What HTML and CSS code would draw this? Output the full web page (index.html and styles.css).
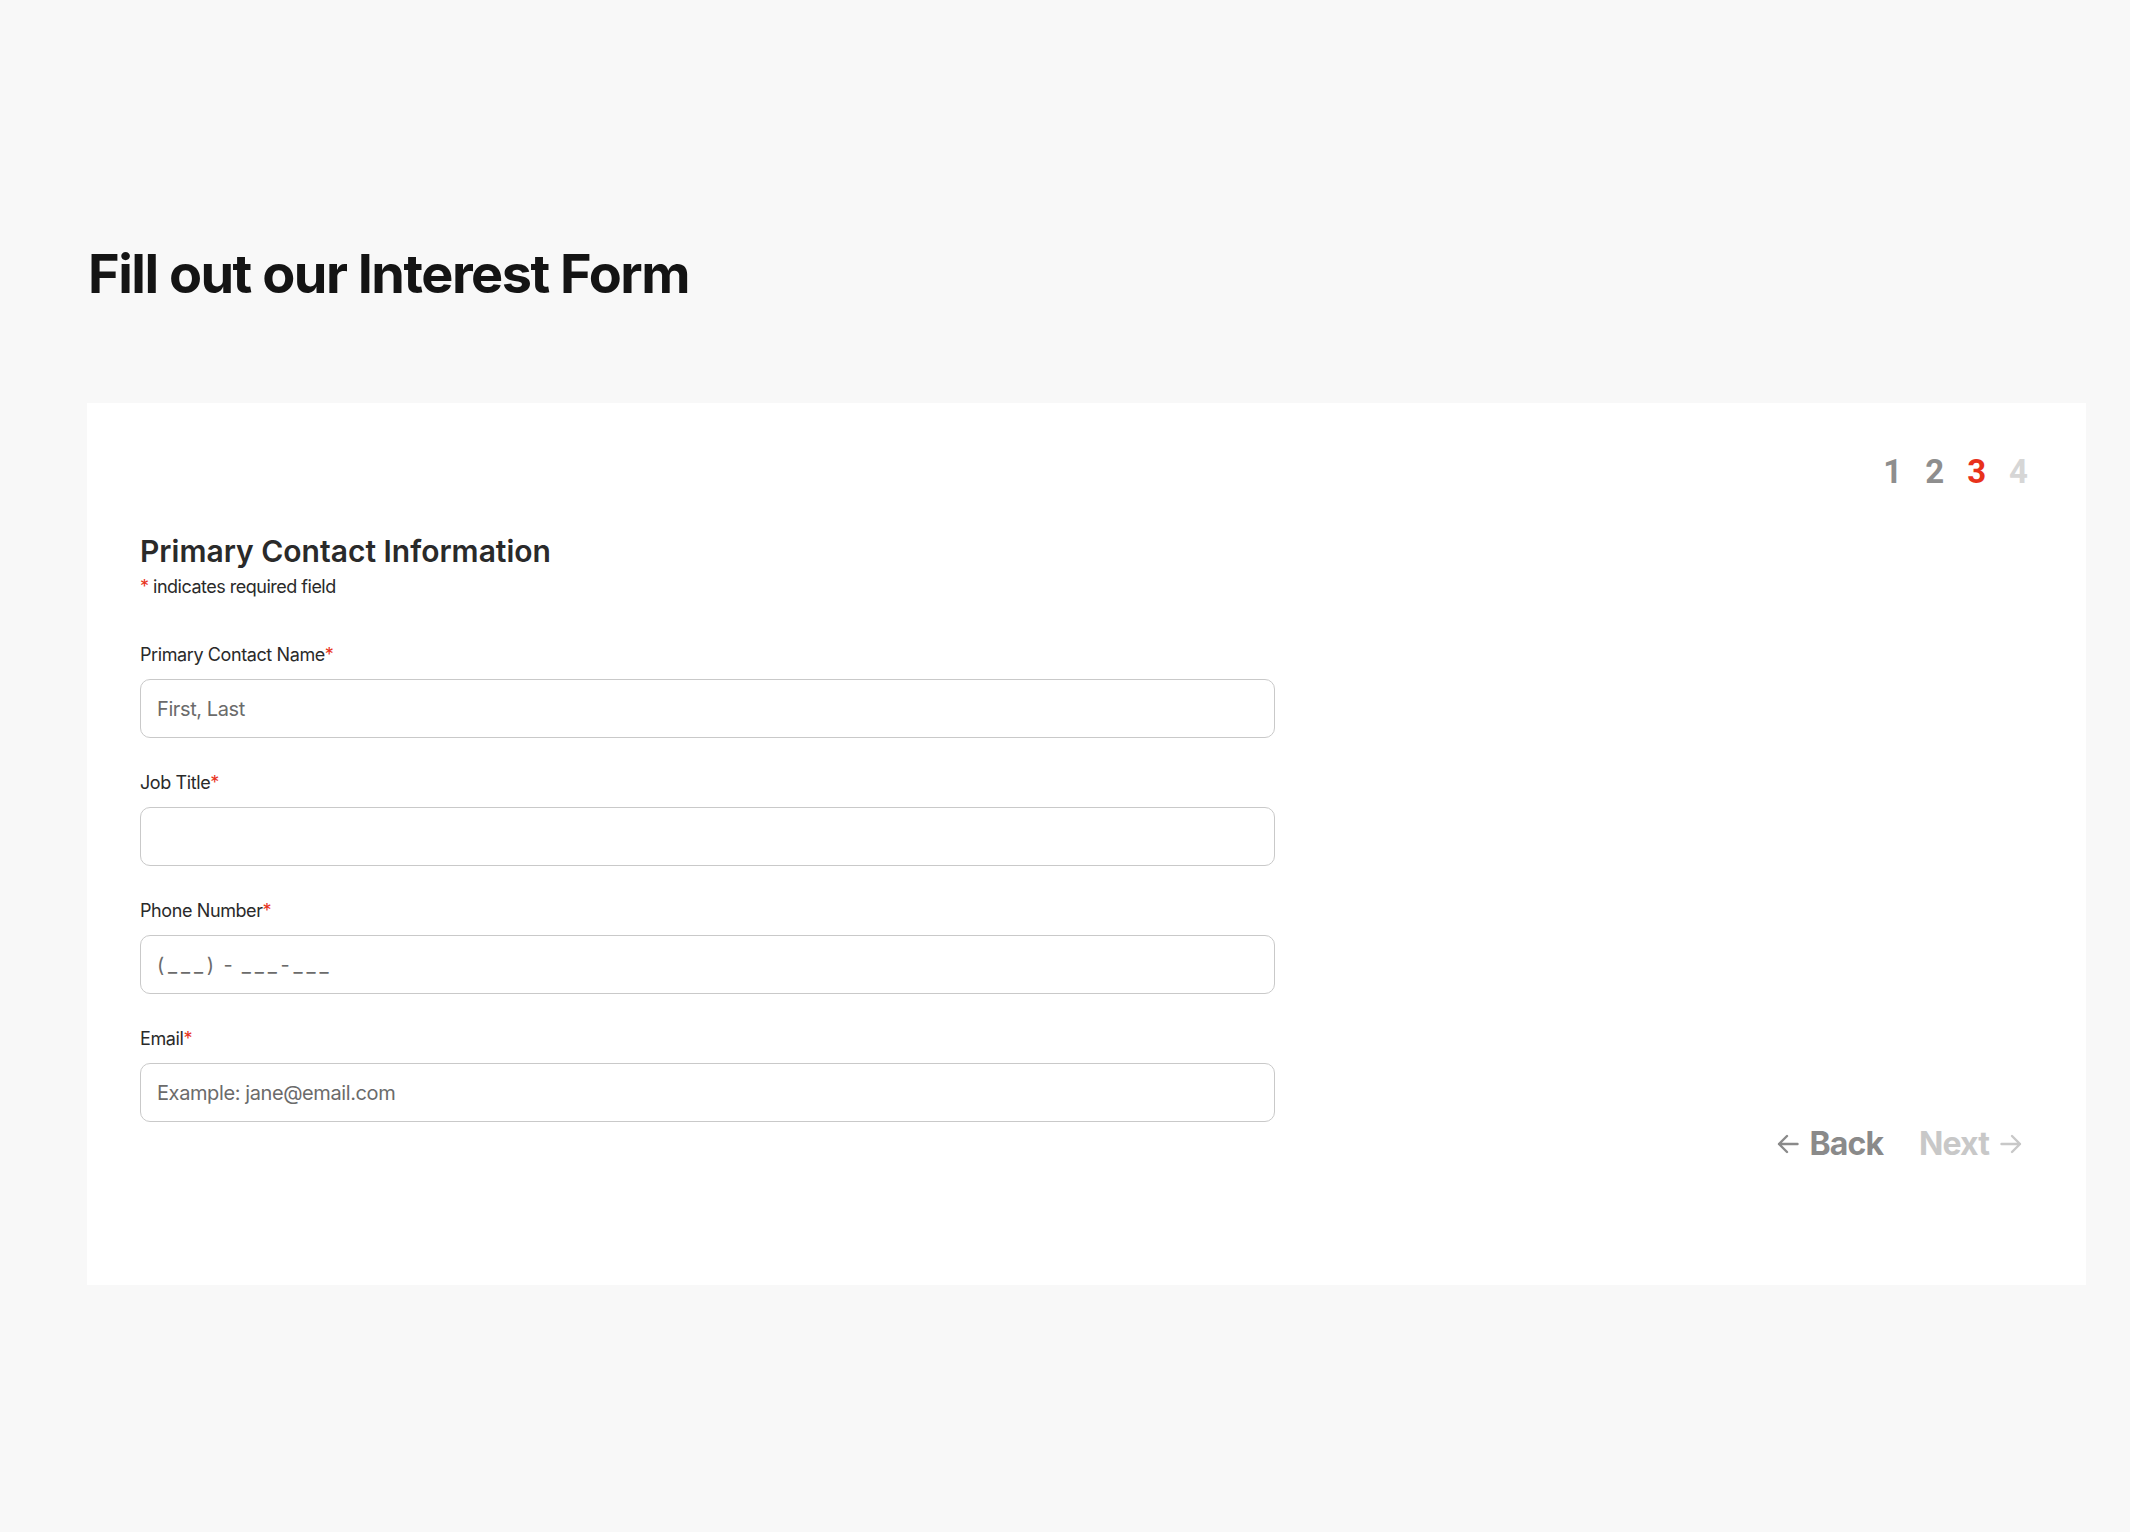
FILE: index.html
```html
<!DOCTYPE html>
<html lang="en">
<head>
    <meta charset="UTF-8">
    <meta name="viewport" content="width=device-width, initial-scale=1.0">
    <title>Interest Form</title>
    <link rel="stylesheet" href="styles.css">
</head>
<body>
    <div id="main">
        <h1 class="page-title">Fill out our Interest Form</h1>

        <div class="form-card">
            <div class="steps">
                <span class="step done">1</span>
                <span class="step done">2</span>
                <span class="step current">3</span>
                <span class="step">4</span>
            </div>

            <form id="contactForm" class="form-body">
                <h2 class="section-title">Primary Contact Information</h2>
                <p class="required-note"><span class="req">*</span> indicates required field</p>

                <div class="form-group">
                    <label for="name">Primary Contact Name<span class="req">*</span></label>
                    <input type="text" id="name" placeholder="First, Last">
                </div>
                <div class="form-group">
                    <label for="title">Job Title<span class="req">*</span></label>
                    <input type="text" id="title">
                </div>
                <div class="form-group">
                    <label for="phone">Phone Number<span class="req">*</span></label>
                    <input type="tel" id="phone" class="phone-input" placeholder="(___) - ___-___">
                </div>
                <div class="form-group">
                    <label for="email">Email<span class="req">*</span></label>
                    <input type="text" id="email" placeholder="Example: jane@email.com">
                </div>
            </form>

            <div class="form-nav">
                <a class="nav-link back" href="#">
                    <svg width="22" height="20" viewBox="0 0 22 20" fill="none" stroke="currentColor" stroke-width="2.4" stroke-linecap="round" stroke-linejoin="round"><path d="M20.5 10H2M10 2L2 10l8 8"/></svg>
                    Back
                </a>
                <a class="nav-link next" href="#">
                    Next
                    <svg width="22" height="20" viewBox="0 0 22 20" fill="none" stroke="currentColor" stroke-width="2.4" stroke-linecap="round" stroke-linejoin="round"><path d="M1.5 10H20M12 2l8 8-8 8"/></svg>
                </a>
            </div>
        </div>
    </div>
</body>
</html>
```

FILE: styles.css
```css
body {
    margin: 0;
    padding: 0;
    background-color: #f8f8f8;
    font-family: Inter, "Noto Sans", sans-serif;
    color: #2a2a2a;
}
#main {
    padding: 236px 44px 248px 87px;
}
.page-title {
    margin: 0 0 92px 0;
    font-size: 54px;
    font-weight: 700;
    line-height: 75px;
    letter-spacing: -1.5px;
    color: #141414;
    padding-left: 1px;
}
.form-card {
    background-color: white;
    padding: 49px 58px 122px 53px;
}
.steps {
    display: flex;
    justify-content: flex-end;
    gap: 23px;
    font-family: Roboto, sans-serif;
    font-weight: 700;
    font-size: 33px;
    line-height: 40px;
    color: #d6d6d6;
}
.step.done {
    color: #8e8e8e;
}
.step.current {
    color: #e8321b;
}
.form-body {
    width: 1135px;
    margin-top: 40px;
}
.section-title {
    margin: 0;
    font-size: 30px;
    font-weight: 600;
    line-height: 38px;
    letter-spacing: 0;
    color: #2a2a2a;
}
.required-note {
    margin: 6px 0 46px 0;
    font-size: 18px;
    line-height: 22px;
    letter-spacing: -0.5px;
    color: #2a2a2a;
}
.req {
    color: #e8321b;
}
.form-group {
    margin-bottom: 34px;
}
.form-group:last-child {
    margin-bottom: 0;
}
label {
    display: block;
    font-size: 18px;
    line-height: 22px;
    letter-spacing: -0.4px;
    margin-bottom: 13px;
    color: #2a2a2a;
}
input {
    display: block;
    box-sizing: border-box;
    width: 100%;
    height: 59px;
    padding: 0 16px;
    border: 1px solid #c9c9c9;
    border-radius: 10px;
    background: white;
    font-family: Inter, "Noto Sans", sans-serif;
    font-size: 20px;
    letter-spacing: -0.4px;
    color: #2a2a2a;
    outline: none;
}
input::placeholder {
    color: #6b6b6b;
}
.phone-input::placeholder {
    letter-spacing: 3.8px;
    word-spacing: -4px;
}
.form-nav {
    display: flex;
    justify-content: flex-end;
    gap: 36px;
    margin-top: 3px;
    padding-right: 6px;
}
.nav-link {
    display: flex;
    align-items: center;
    gap: 11px;
    text-decoration: none;
    font-size: 32px;
    font-weight: 700;
    line-height: 38px;
    letter-spacing: -0.9px;
}
.nav-link.back {
    color: #8a8a8a;
}
.nav-link.next {
    color: #c8c8c8;
}
```
